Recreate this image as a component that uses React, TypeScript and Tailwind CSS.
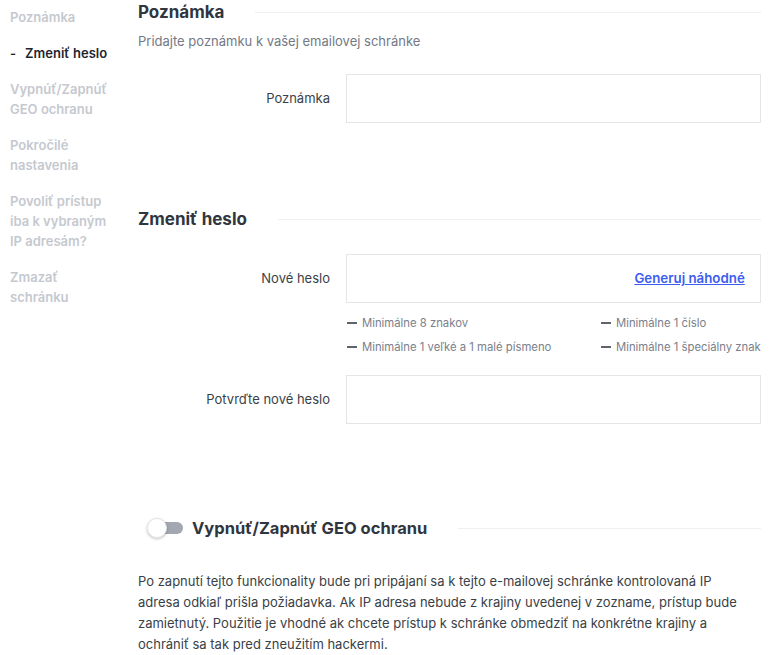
const nav = [
  { label: "Poznámka" },
  { label: "Zmeniť heslo", active: true },
  { label: "Vypnúť/Zapnúť GEO ochranu" },
  { label: "Pokročilé nastavenia" },
  { label: "Povoliť prístup iba k vybraným IP adresám?" },
  { label: "Zmazať schránku" },
];

const rules = [
  "Minimálne 8 znakov",
  "Minimálne 1 číslo",
  "Minimálne 1 veľké a 1 malé písmeno",
  "Minimálne 1 špeciálny znak",
];

const SectionTitle = ({ children }: { children: React.ReactNode }) => (
  <div className="flex items-center">
    <h2 className="text-[17px] leading-6 font-bold text-[#2f3640] whitespace-nowrap">{children}</h2>
    <div className="ml-[31px] h-px flex-1 bg-[#eeeff1]" />
  </div>
);

const Field = ({ label, children }: { label: string; children?: React.ReactNode }) => (
  <div className="flex items-center">
    <label className="w-[192px] text-right text-[13px] text-[#3a3f47]">{label}</label>
    <div className="ml-4 flex h-[49px] flex-1 items-center justify-end border border-[#e3e5e8] bg-white pr-[15px]">
      {children}
    </div>
  </div>
);

export default function App() {
  return (
    <div className="flex min-h-screen bg-white font-['Inter',sans-serif] antialiased">
      <aside className="w-[138px] shrink-0 pl-[10px] pr-[28px] pt-[7px]">
        <ul className="flex flex-col gap-4">
          {nav.map((item) => (
            <li
              key={item.label}
              className={`text-[13px] leading-5 font-semibold ${item.active ? "text-[#1f2530]" : "text-[#c5c9cf]"}`}
            >
              {item.active && <span className="mr-[9px]">-</span>}
              {item.label}
            </li>
          ))}
        </ul>
      </aside>

      <main className="flex-1 pr-[23px]">
        <SectionTitle>Poznámka</SectionTitle>
        <p className="mt-[7px] text-[13px] leading-5 text-[#737985]">Pridajte poznámku k vašej emailovej schránke</p>
        <div className="mt-[23px]">
          <Field label="Poznámka" />
        </div>

        <div className="mt-[84px]">
          <SectionTitle>Zmeniť heslo</SectionTitle>
        </div>
        <div className="mt-[23px]">
          <Field label="Nové heslo">
            <a href="#" className="text-[13.3px] font-semibold text-[#3d5cf0] underline">Generuj náhodné</a>
          </Field>
        </div>
        <div className="ml-[209px] mt-3 grid grid-cols-[254px_1fr] gap-y-2">
          {rules.map((r) => (
            <div key={r} className="flex items-center text-[11.3px] leading-4 text-[#7a808a] whitespace-nowrap">
              <span className="mr-[5px] inline-block h-[2px] w-[10px] bg-[#5f646c]" />
              {r}
            </div>
          ))}
        </div>
        <div className="mt-5">
          <Field label="Potvrďte nové heslo" />
        </div>

        <div className="mt-[92px] flex items-center">
          <button className="relative ml-[9px] h-5 w-[36px] shrink-0">
            <span className="absolute right-0 top-[4px] h-3 w-[26px] rounded-full bg-[#a3a8b0]" />
            <span className="absolute left-0 top-0 h-5 w-5 rounded-full border border-[#e5e7eb] bg-white shadow-[0_1px_3px_rgba(0,0,0,0.25)]" />
          </button>
          <h2 className="ml-[9px] text-[16.5px] leading-6 font-bold text-[#2f3640] whitespace-nowrap">Vypnúť/Zapnúť GEO ochranu</h2>
          <div className="ml-[31px] h-px flex-1 bg-[#eeeff1]" />
        </div>
        <p className="mt-[31px] mr-[10px] text-[13px] leading-[21px] text-[#3a3f47]">
          Po zapnutí tejto funkcionality bude pri pripájaní sa k tejto e-mailovej schránke kontrolovaná IP adresa odkiaľ prišla požiadavka. Ak IP adresa nebude z krajiny uvedenej v zozname, prístup bude zamietnutý. Použitie je vhodné ak chcete prístup k schránke obmedziť na konkrétne krajiny a ochrániť sa tak pred zneužitím hackermi.
        </p>
      </main>
    </div>
  );
}
